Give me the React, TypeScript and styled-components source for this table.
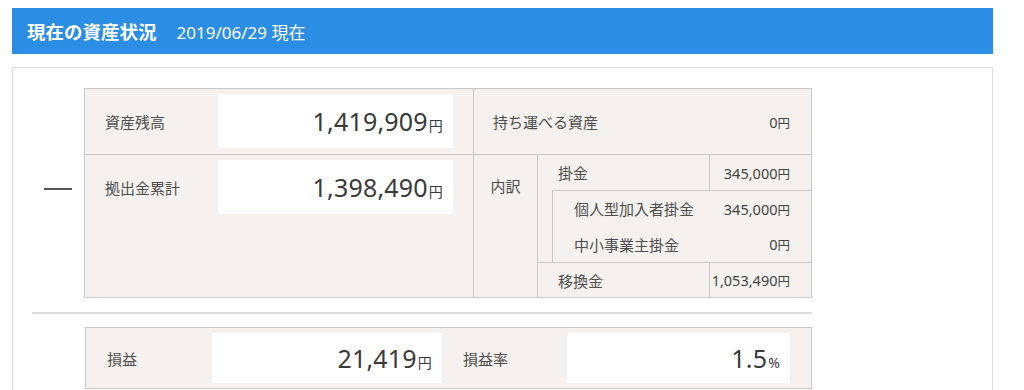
import React from "react";
import styled, { createGlobalStyle } from "styled-components";

const GlobalStyle = createGlobalStyle`
  body {
    margin: 0;
    padding: 8px 0 0 12px;
    background: #fff;
    color: #4d4d4d;
    font-family: "Noto Sans", "Noto Sans CJK JP", sans-serif;
  }
  * {
    box-sizing: border-box;
  }
`;

const Page = styled.div`
  width: 981px;
`;

const Header = styled.h2`
  margin: 0;
  height: 46px;
  padding: 0 15px;
  display: flex;
  align-items: center;
  gap: 20px;
  background: #2b8de3;
  color: #fff;
`;

const HeaderTitle = styled.span`
  font-size: 18.5px;
  font-weight: bold;
`;

const HeaderDate = styled.span`
  font-size: 17px;
  font-weight: normal;
`;

const Panel = styled.section`
  margin-top: 13px;
  border: 1px solid #ddd;
  padding: 20px 19px 40px;
`;

const Content = styled.div`
  width: 780px;
`;

const TopSection = styled.div`
  display: flex;
`;

const OperatorCell = styled.div`
  width: 52px;
  display: flex;
  justify-content: center;
  padding-top: 100px;
`;

const Minus = styled.span`
  display: block;
  width: 28px;
  height: 2px;
  background: #555;
`;

const SummaryTable = styled.div`
  width: 728px;
  display: grid;
  grid-template-columns: 388px 1fr;
  border: 1px solid #c8c8c8;
  background: #f4f1ee;
`;

const LeftColumn = styled.div`
  display: flex;
  flex-direction: column;
`;

const AmountRow = styled.div<{ $first?: boolean }>`
  display: grid;
  grid-template-columns: 133px 235px;
  align-items: center;
  padding: ${(p) => (p.$first ? "5px 0 6px" : "5px 0 0")};
  border-bottom: ${(p) => (p.$first ? "1px solid #c8c8c8" : "none")};
`;

const Label = styled.span<{ $pad?: number }>`
  padding-left: ${(p) => p.$pad ?? 20}px;
  font-size: 15px;
`;

const ValueBox = styled.div<{ $height?: number }>`
  height: ${(p) => p.$height ?? 54}px;
  padding-right: 10px;
  display: flex;
  align-items: center;
  justify-content: flex-end;
  background: #fff;
`;

const Amount = styled.span`
  font-size: 25px;
  color: #3a3a3a;
  letter-spacing: 0.2px;
`;

const BigUnit = styled.span`
  font-size: 14px;
  margin-left: 1px;
`;

const RightColumn = styled.div`
  border-left: 1px solid #c8c8c8;
  display: flex;
  flex-direction: column;
`;

const PortableRow = styled.div`
  height: 66px;
  padding: 0 21px 0 19px;
  display: flex;
  align-items: center;
  justify-content: space-between;
  border-bottom: 1px solid #c8c8c8;
`;

const SmallValue = styled.span`
  font-size: 14.5px;
  color: #444;
  white-space: nowrap;
`;

const SmallUnit = styled.span`
  font-size: 12.5px;
`;

const Breakdown = styled.div`
  flex: 1;
  display: grid;
  grid-template-columns: 64px 1fr;
`;

const BreakdownHead = styled.div`
  border-right: 1px solid #c8c8c8;
  padding-top: 20px;
  text-align: center;
  font-size: 15px;
  line-height: 22px;
`;

const Items = styled.div`
  display: flex;
  flex-direction: column;
`;

const ItemRow = styled.div<{ $height: number; $top?: boolean }>`
  height: ${(p) => p.$height}px;
  display: grid;
  grid-template-columns: 171px 1fr;
  border-top: ${(p) => (p.$top ? "1px solid #c8c8c8" : "none")};
`;

const ItemLabel = styled.div`
  padding-left: 20px;
  display: flex;
  align-items: center;
  font-size: 15px;
`;

const ItemValue = styled.div`
  border-left: 1px solid #c8c8c8;
  padding-right: 21px;
  display: flex;
  align-items: center;
  justify-content: flex-end;
`;

const SubBlock = styled.div`
  margin-left: 14px;
  height: 72px;
  border-top: 1px solid #c8c8c8;
  border-left: 1px solid #c8c8c8;
  display: flex;
  flex-direction: column;
`;

const SubRow = styled.div`
  flex: 1;
  padding: 0 21px;
  display: flex;
  align-items: center;
  justify-content: space-between;
  font-size: 15px;
`;

const Separator = styled.hr`
  margin: 14px 0 13px;
  border: none;
  height: 2px;
  background: #ddd;
`;

const BottomSection = styled.div`
  padding-left: 53px;
`;

const ResultTable = styled.div`
  width: 727px;
  padding: 5px 21px 5px 0;
  display: grid;
  grid-template-columns: 126px 230px 125px 223px;
  align-items: center;
  border: 1px solid #c8c8c8;
  background: #f4f1ee;
`;

const Yen = ({ value }: { value: string }) => (
  <SmallValue>
    {value}
    <SmallUnit>円</SmallUnit>
  </SmallValue>
);

export default function App(): React.ReactElement {
  return (
    <Page>
      <GlobalStyle />
      <Header>
        <HeaderTitle>現在の資産状況</HeaderTitle>
        <HeaderDate>2019/06/29 現在</HeaderDate>
      </Header>
      <Panel>
        <Content>
          <TopSection>
            <OperatorCell>
              <Minus />
            </OperatorCell>
            <SummaryTable>
              <LeftColumn>
                <AmountRow $first>
                  <Label>資産残高</Label>
                  <ValueBox>
                    <Amount>
                      1,419,909<BigUnit>円</BigUnit>
                    </Amount>
                  </ValueBox>
                </AmountRow>
                <AmountRow>
                  <Label>拠出金累計</Label>
                  <ValueBox>
                    <Amount>
                      1,398,490<BigUnit>円</BigUnit>
                    </Amount>
                  </ValueBox>
                </AmountRow>
              </LeftColumn>
              <RightColumn>
                <PortableRow>
                  <Label $pad={0}>持ち運べる資産</Label>
                  <Yen value="0" />
                </PortableRow>
                <Breakdown>
                  <BreakdownHead>内訳</BreakdownHead>
                  <Items>
                    <ItemRow $height={35}>
                      <ItemLabel>掛金</ItemLabel>
                      <ItemValue>
                        <Yen value="345,000" />
                      </ItemValue>
                    </ItemRow>
                    <SubBlock>
                      <SubRow>
                        <span>個人型加入者掛金</span>
                        <Yen value="345,000" />
                      </SubRow>
                      <SubRow>
                        <span>中小事業主掛金</span>
                        <Yen value="0" />
                      </SubRow>
                    </SubBlock>
                    <ItemRow $height={35} $top>
                      <ItemLabel>移換金</ItemLabel>
                      <ItemValue>
                        <Yen value="1,053,490" />
                      </ItemValue>
                    </ItemRow>
                  </Items>
                </Breakdown>
              </RightColumn>
            </SummaryTable>
          </TopSection>
          <Separator />
          <BottomSection>
            <ResultTable>
              <Label $pad={21}>損益</Label>
              <ValueBox $height={50}>
                <Amount>
                  21,419<BigUnit>円</BigUnit>
                </Amount>
              </ValueBox>
              <Label $pad={21}>損益率</Label>
              <ValueBox $height={50}>
                <Amount>
                  1.5<BigUnit>%</BigUnit>
                </Amount>
              </ValueBox>
            </ResultTable>
          </BottomSection>
        </Content>
      </Panel>
    </Page>
  );
}
